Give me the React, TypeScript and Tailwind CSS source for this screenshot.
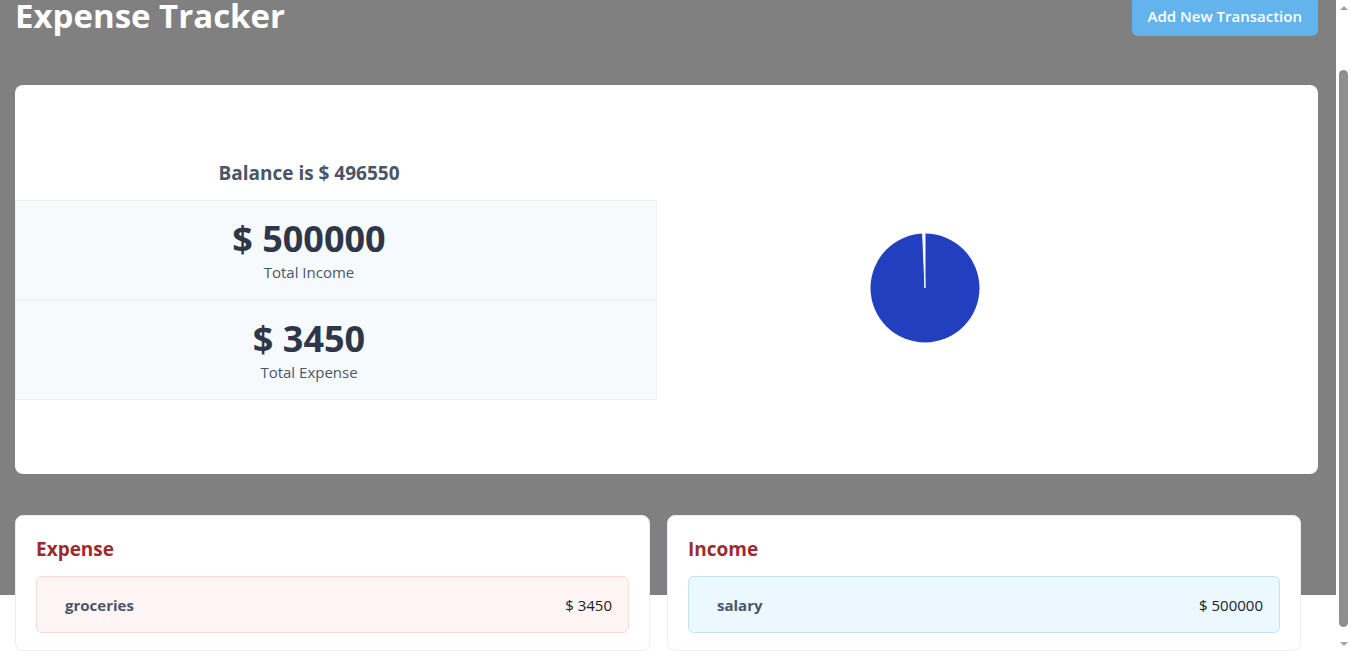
import { useEffect, useRef } from "react";

const Pie = () => {
  // income vs expense, expense slice is tiny (~2.5deg) and drawn as white gap
  const cx = 55;
  const cy = 55;
  const r = 54.5;
  const a = (2.47 * Math.PI) / 180;
  const x1 = cx - r * Math.sin(a);
  const y1 = cy - r * Math.cos(a);
  return (
    <svg width="110" height="110" viewBox="0 0 110 110">
      <circle cx={cx} cy={cy} r={r} fill="#213fbf" />
      <path
        d={`M${cx} ${cy} L${x1} ${y1} A${r} ${r} 0 0 1 ${cx} ${cy - r} Z`}
        fill="#ffffff"
        stroke="#ffffff"
        strokeWidth="1"
        strokeLinejoin="round"
      />
    </svg>
  );
};

const StatBox = ({ amount, label }: { amount: string; label: string }) => (
  <div className="h-[100px] border border-[#edf2f7] bg-[#f7fafc] pr-[54px] flex flex-col items-center justify-center">
    <div className="text-[36px] leading-[44px] font-bold text-[#2d3748]">{amount}</div>
    <div className="text-[15px] leading-[22px] text-[#4a5568]">{label}</div>
  </div>
);

const ListCard = ({
  title,
  name,
  amount,
  tone,
}: {
  title: string;
  name: string;
  amount: string;
  tone: "red" | "blue";
}) => (
  <div className="bg-white rounded-lg border border-[#e9eef4] px-[20px] pt-[19px] pb-[17px]">
    <h2 className="text-[19px] leading-[28px] font-bold text-[#9b2c2c]">{title}</h2>
    <div
      className={
        tone === "red"
          ? "mt-[13px] h-[57px] rounded-md border border-[#fed7d7] bg-[#fff5f5] pl-[28px] pr-[16px] pt-[2px] flex items-center justify-between"
          : "mt-[13px] h-[57px] rounded-md border border-[#bee3f8] bg-[#ebf8ff] pl-[28px] pr-[16px] pt-[2px] flex items-center justify-between"
      }
    >
      <span className="text-[15px] font-bold text-[#4a5568]">{name}</span>
      <span className="text-[15px] text-[#1a202c]">{amount}</span>
    </div>
  </div>
);

const Scrollbar = () => (
  <div className="w-[15px] shrink-0 bg-white flex flex-col">
    <div className="h-[15px] flex items-center justify-center">
      <div className="w-0 h-0 border-l-[4px] border-r-[4px] border-b-[4px] border-l-transparent border-r-transparent border-b-[#a3a3a3]" />
    </div>
    <div className="flex-1 flex flex-col pt-[55px] pb-[9px] px-[3px]">
      <div className="flex-1 rounded-full bg-[#8f8f8f]" />
    </div>
    <div className="h-[15px] flex items-center justify-center">
      <div className="w-0 h-0 border-l-[4px] border-r-[4px] border-t-[4px] border-l-transparent border-r-transparent border-t-[#a3a3a3]" />
    </div>
  </div>
);

export default function App() {
  const scroller = useRef<HTMLDivElement>(null);

  useEffect(() => {
    if (scroller.current) scroller.current.scrollTop = 56;
  }, []);

  return (
    <div className="h-screen flex overflow-hidden font-['Open_Sans','Noto_Sans',sans-serif]">
      <div ref={scroller} className="flex-1 overflow-y-auto [scrollbar-width:none]">
        <div className="bg-[#808080] h-[651px] pl-[15px] pr-[18px] pt-[52px]">
          <div className="flex items-center justify-between h-[40px]">
            <h1 className="text-[33px] leading-[40px] font-bold text-white">Expense Tracker</h1>
            <button className="h-[40px] px-[16px] rounded-md bg-[#63b3ed] text-white text-[15px] font-semibold">
              Add New Transaction
            </button>
          </div>

          <div className="mt-[49px] h-[389px] bg-white rounded-lg flex items-center">
            <div className="w-[642px] flex flex-col">
              <div className="pr-[54px] text-center text-[19px] leading-[27px] font-bold text-[#4a5568] mb-[13px]">
                Balance is $ 496550
              </div>
              <StatBox amount="$ 500000" label="Total Income" />
              <StatBox amount="$ 3450" label="Total Expense" />
            </div>
            <div className="flex-1 pl-[213px] mt-4">
              <Pie />
            </div>
          </div>

          <div className="mt-[41px] grid grid-cols-[635px_634px] gap-[17px]">
            <ListCard title="Expense" name="groceries" amount="$ 3450" tone="red" />
            <ListCard title="Income" name="salary" amount="$ 500000" tone="blue" />
          </div>
        </div>
        <div className="h-[75px]" />
      </div>
      <Scrollbar />
    </div>
  );
}
